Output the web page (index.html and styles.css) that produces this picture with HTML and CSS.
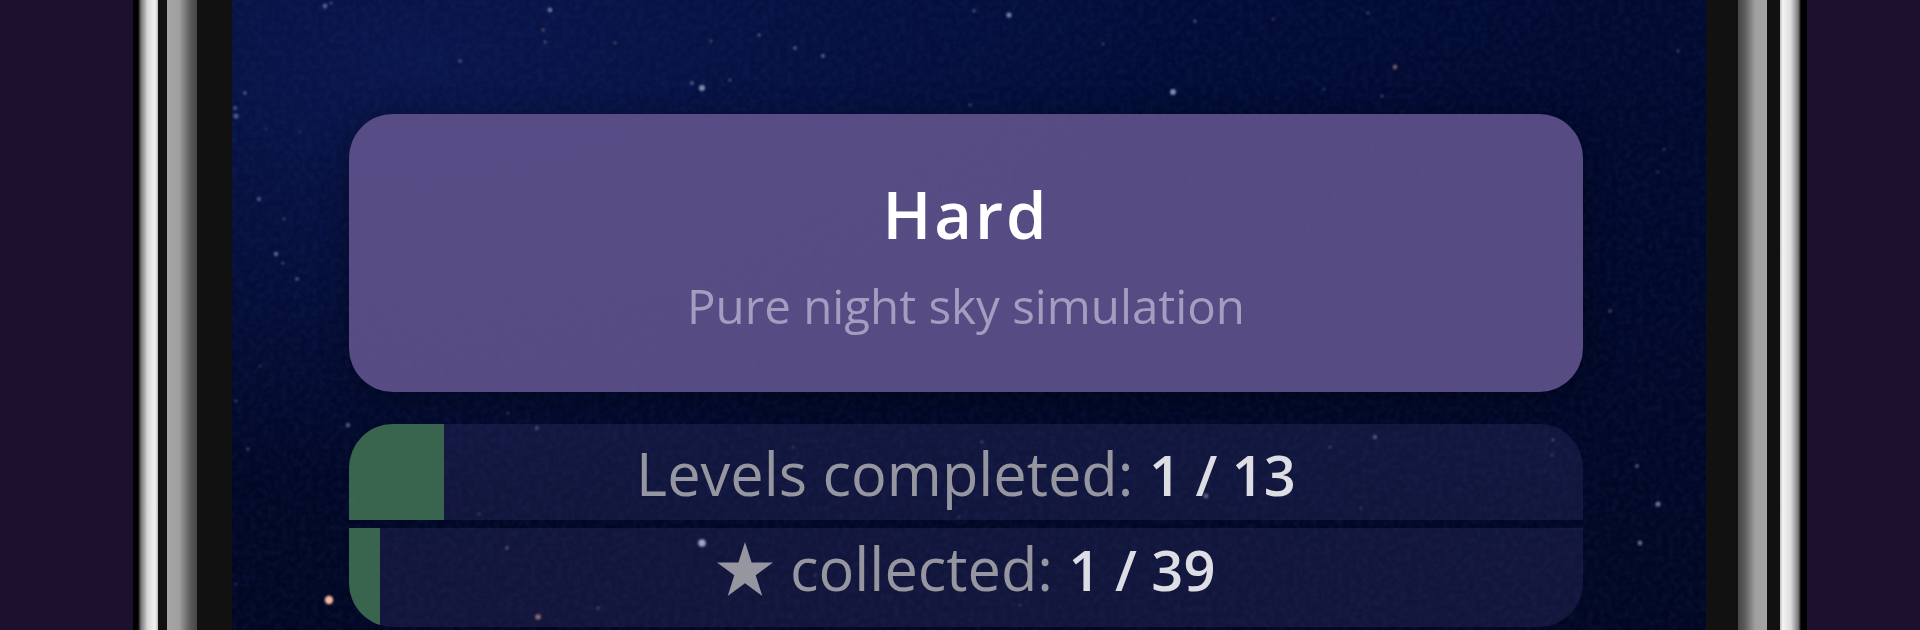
FILE: index.html
```html
<!DOCTYPE html>
<html lang="en">
<head>
    <meta charset="UTF-8">
    <title>Hard</title>
    <link rel="stylesheet" href="styles.css">
</head>
<body>
    <div class="phone">
        <div class="rail rail-outer-left"></div>
        <div class="rail-gap gap-left"></div>
        <div class="rail rail-inner-left"></div>
        <div class="bezel bezel-left"></div>

        <div class="screen">
            <svg class="sky" width="1474" height="630" viewBox="232 0 1474 630">
                <defs>
                    <filter id="grain" x="0" y="0" width="100%" height="100%">
                        <feTurbulence type="fractalNoise" baseFrequency="0.16" numOctaves="2" seed="4"/>
                        <feColorMatrix values="0 0 0 0 0.03  0 0 0 0 0.06  0 0 0 0 0.26  0.9 0 0 0 -0.3"/>
                    </filter>
                    <filter id="soft"><feGaussianBlur stdDeviation="0.9"/></filter>
                </defs>
                <rect x="232" y="0" width="1474" height="630" filter="url(#grain)" opacity="0.3"/>
                <g filter="url(#soft)" fill="#a9b8d6" opacity="0.8">
                    <circle cx="325" cy="6" r="2.4" opacity=".6"/><circle cx="331" cy="3" r="1.6" opacity=".4"/>
                    <circle cx="550" cy="10" r="2.4" opacity=".75"/><circle cx="460" cy="61" r="1.8" opacity=".5"/>
                    <circle cx="245" cy="93" r="2" opacity=".5"/><circle cx="235" cy="108" r="2" opacity=".5"/>
                    <circle cx="692" cy="83" r="2" opacity=".5"/><circle cx="702" cy="88" r="3" opacity=".95"/>
                    <circle cx="730" cy="80" r="1.6" opacity=".5"/><circle cx="759" cy="35" r="1.8" opacity=".5"/>
                    <circle cx="795" cy="48" r="2" opacity=".55"/><circle cx="823" cy="56" r="2" opacity=".6"/>
                    <circle cx="974" cy="11" r="1.8" opacity=".45"/><circle cx="1009" cy="15" r="2.6" opacity=".85"/>
                    <circle cx="1195" cy="21" r="1.8" opacity=".5"/><circle cx="1103" cy="44" r="1.5" opacity=".4"/>
                    <circle cx="1173" cy="92" r="3" opacity=".95"/><circle cx="970" cy="105" r="1.5" opacity=".45"/>
                    <circle cx="1368" cy="13" r="1.6" opacity=".45"/><circle cx="1324" cy="89" r="1.5" opacity=".3"/>
                    <circle cx="1382" cy="96" r="1.6" opacity=".5"/><circle cx="1678" cy="51" r="1.8" opacity=".4"/>
                    <circle cx="236" cy="116" r="2.6" opacity=".55"/><circle cx="266" cy="129" r="1.6" opacity=".25"/>
                    <circle cx="300" cy="132" r="1.5" opacity=".3"/><circle cx="259" cy="199" r="2.2" opacity=".5"/>
                    <circle cx="276" cy="254" r="2.2" opacity=".65"/><circle cx="283" cy="263" r="1.5" opacity=".45"/>
                    <circle cx="297" cy="279" r="2" opacity=".5"/><circle cx="260" cy="366" r="1.5" opacity=".3"/>
                    <circle cx="236" cy="401" r="1.6" opacity=".4"/><circle cx="348" cy="425" r="2.2" opacity=".6"/>
                    <circle cx="248" cy="449" r="1.8" opacity=".4"/><circle cx="236" cy="584" r="1.5" opacity=".3"/>
                    <circle cx="1664" cy="149" r="1.6" opacity=".35"/><circle cx="1637" cy="466" r="2" opacity=".55"/>
                    <circle cx="1658" cy="504" r="2.6" opacity=".8"/><circle cx="1640" cy="543" r="2.4" opacity=".7"/>
                    <circle cx="508" cy="413" r="1.6" opacity=".4"/><circle cx="537" cy="428" r="2" opacity=".5"/>
                    <circle cx="406" cy="438" r="1.6" opacity=".45"/><circle cx="352" cy="500" r="2.2" opacity=".55"/>
                    <circle cx="479" cy="514" r="1.6" opacity=".4"/><circle cx="507" cy="548" r="2" opacity=".5"/>
                    <circle cx="702" cy="543" r="3.8" fill="#e2eefc"/><circle cx="598" cy="608" r="1.8" opacity=".4"/>
                    <circle cx="1206" cy="496" r="2.4" opacity=".7"/><circle cx="982" cy="442" r="1.6" opacity=".45"/>
                    <circle cx="959" cy="517" r="1.5" opacity=".35"/><circle cx="1020" cy="605" r="1.5" opacity=".35"/>
                    <circle cx="1375" cy="437" r="2.2" opacity=".6"/><circle cx="1330" cy="447" r="1.6" opacity=".45"/>
                    <circle cx="1553" cy="440" r="1.8" opacity=".45"/><circle cx="1361" cy="508" r="1.5" opacity=".35"/>
                    <circle cx="527" cy="126" r="1.8" opacity=".2"/><circle cx="979" cy="189" r="1.8" opacity=".2"/>
                    <circle cx="1559" cy="141" r="1.8" opacity=".2"/>
                </g>
                <g filter="url(#soft)" fill="#d89a86">
                    <circle cx="543" cy="30" r="1.7" opacity=".4"/><circle cx="545" cy="42" r="1.7" opacity=".35"/>
                    <circle cx="615" cy="43" r="1.6" opacity=".35"/><circle cx="711" cy="41" r="1.6" opacity=".35"/>
                    <circle cx="1273" cy="19" r="1.8" opacity=".25"/><circle cx="1395" cy="67" r="2.4" opacity=".55"/>
                    <circle cx="284" cy="219" r="1.5" opacity=".35"/><circle cx="1658" cy="172" r="1.6" opacity=".25"/>
                    <circle cx="1610" cy="311" r="1.9" opacity=".35"/><circle cx="793" cy="447" r="1.5" opacity=".3"/>
                    <circle cx="1552" cy="455" r="1.5" opacity=".3"/><circle cx="815" cy="575" r="1.4" opacity=".3"/>
                    <circle cx="538" cy="617" r="2.8" opacity=".75"/><circle cx="329" cy="600" r="4.2" fill="#f6b79c"/>
                </g>
            </svg>

            <div class="card">
                <div class="card-title">Hard</div>
                <div class="card-sub">Pure night sky simulation</div>
            </div>

            <div class="stats">
                <div class="stat stat-top">
                    <div class="stat-fill" style="width: 95px"></div>
                    <span class="stat-text">Levels completed: <b>1 / 13</b></span>
                </div>
                <div class="stat stat-bottom">
                    <div class="stat-fill" style="width: 31px"></div>
                    <span class="stat-text">
                        <svg class="star-icon" width="56" height="54" viewBox="0 0 56 54"><polygon points="28,0 34.6,20.6 56,20.6 38.7,33.3 45.3,54 28,41.2 10.7,54 17.3,33.3 0,20.6 21.4,20.6"/></svg>
                        collected: <b>1 / 39</b>
                    </span>
                </div>
            </div>
        </div>

        <div class="bezel bezel-right"></div>
        <div class="rail rail-inner-right"></div>
        <div class="rail-gap gap-right"></div>
        <div class="rail rail-outer-right"></div>
    </div>
</body>
</html>
```

FILE: styles.css
```css
* {
    margin: 0;
    padding: 0;
    box-sizing: border-box;
    font-family: 'Open Sans', sans-serif;
}

body {
    height: 630px;
    overflow: hidden;
    padding: 0 113px 0 133px;
    background: #1c102e;
}

.phone {
    display: flex;
    height: 630px;
}

/* metal frame strips */
.rail {
    flex: none;
}

.rail-outer-left {
    width: 25px;
    background: linear-gradient(90deg, #000 0, #000 20%, #777 32%, #d8d8d8 58%, #f2f2f2 88%, #bbb 100%);
}

.rail-outer-right {
    width: 27px;
    background: linear-gradient(90deg, #bbb 0, #f4f4f4 10%, #dcdcdc 40%, #777 68%, #000 78%, #000 100%);
}

.rail-inner-left {
    width: 30px;
    background: linear-gradient(90deg, #a4a4a4 0, #a0a0a0 40%, #5a5a5a 78%, #474747 100%);
}

.rail-inner-right {
    width: 29px;
    background: linear-gradient(90deg, #474747 0, #5a5a5a 22%, #a0a0a0 60%, #a4a4a4 100%);
}

.rail-gap {
    flex: none;
    background: #111;
}

.gap-left {
    width: 9px;
}

.gap-right {
    width: 13px;
}

.bezel {
    flex: none;
    background: #111;
}

.bezel-left {
    width: 35px;
}

.bezel-right {
    width: 32px;
}

.screen {
    position: relative;
    flex: none;
    width: 1474px;
    padding: 114px 123px 0 117px;
    background:
        radial-gradient(ellipse 760px 420px at 180px 60px, rgba(12, 25, 84, 0.8), rgba(12, 25, 84, 0) 100%),
        radial-gradient(ellipse 600px 240px at 800px 20px, rgba(4, 16, 66, 0.5), rgba(4, 16, 66, 0) 100%),
        linear-gradient(180deg, #010a30 0, #010722 100%);
}

.sky {
    position: absolute;
    left: 0;
    top: 0;
}

.card {
    position: relative;
    height: 278px;
    border-radius: 44px;
    background: rgba(94, 81, 138, 0.93);
    box-shadow: 0 6px 30px rgba(0, 0, 0, 0.35);
    text-align: center;
}

.card-title {
    padding-top: 68px;
    font-size: 65px;
    line-height: 64px;
    font-weight: 600;
    letter-spacing: 3px;
    color: #ffffff;
}

.card-sub {
    margin-top: 30px;
    font-size: 47.5px;
    line-height: 60px;
    color: #a49dc0;
}

.stats {
    position: relative;
    display: flex;
    flex-direction: column;
    gap: 8px;
    margin-top: 32px;
}

.stat {
    position: relative;
    display: flex;
    align-items: center;
    justify-content: center;
    overflow: hidden;
    background: rgba(78, 74, 140, 0.22);
}

.stat-top {
    height: 96px;
    padding-top: 2px;
    border-radius: 44px 44px 0 0;
}

.stat-bottom {
    height: 99px;
    padding-bottom: 18px;
    border-radius: 0 0 44px 44px;
}

.stat-fill {
    position: absolute;
    left: 0;
    top: 0;
    bottom: 0;
    background: rgba(60, 106, 80, 0.93);
}

.stat-text {
    position: relative;
    font-size: 59.5px;
    line-height: 70px;
    color: #95969f;
}

.stat-text b {
    font-size: 56px;
    font-weight: 600;
    color: #dddde4;
}

.star-icon {
    vertical-align: -5px;
    fill: #95969f;
    margin-right: 2px;
}
```
